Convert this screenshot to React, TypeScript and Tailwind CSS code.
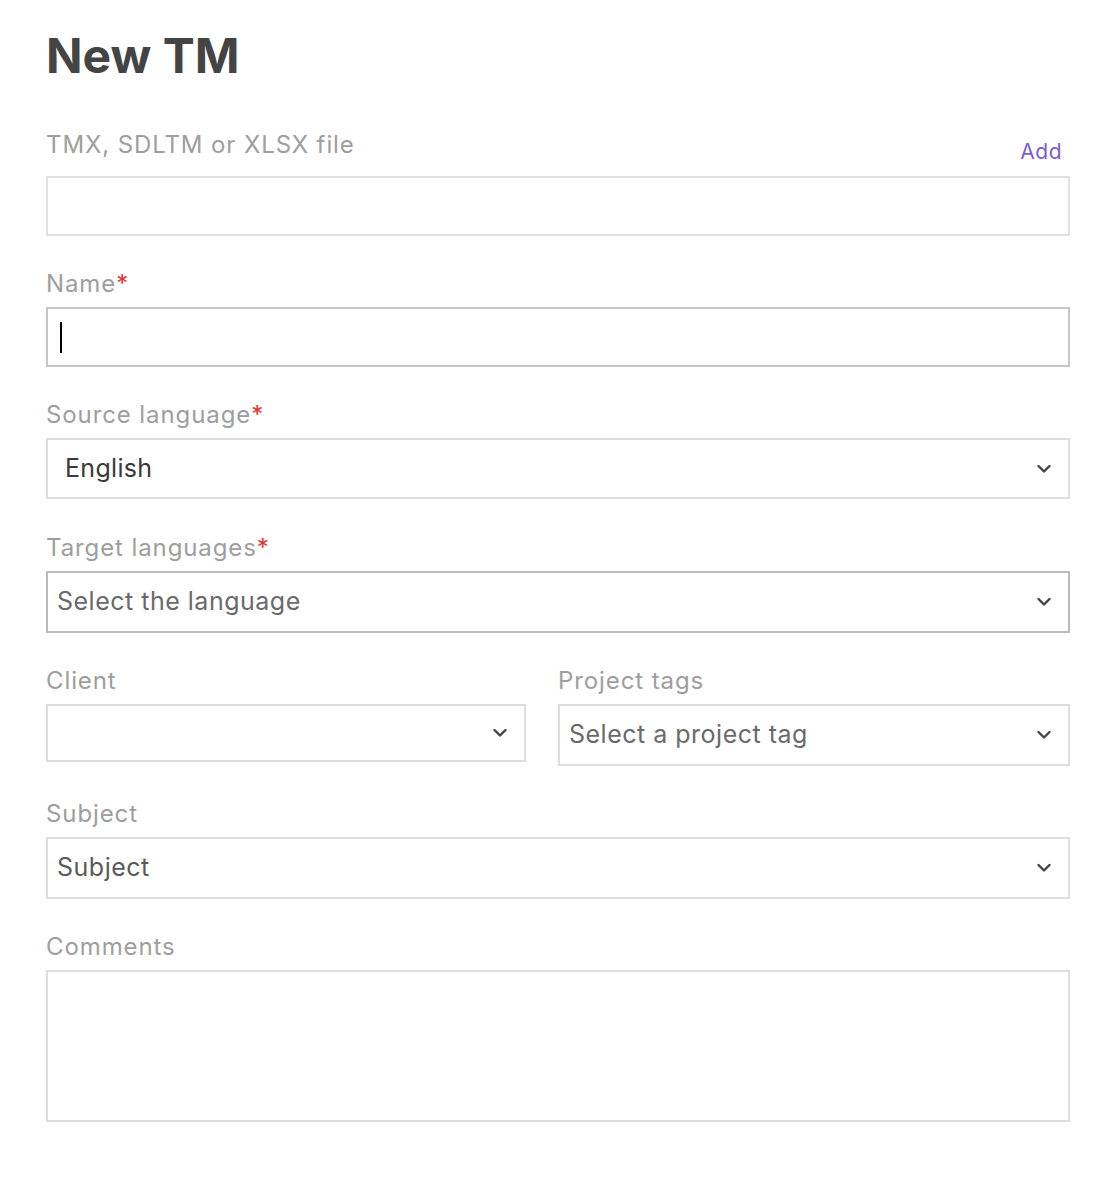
import React from 'react';

const font = { fontFamily: 'Inter, "Noto Sans", sans-serif' };

function Chevron() {
    return (
        <svg width="16" height="10" viewBox="0 0 16 10" fill="none" className="shrink-0">
            <path d="M2.5 2l5.5 5.5 5.5-5.5" stroke="#444" strokeWidth="2.4" strokeLinecap="round" strokeLinejoin="round" />
        </svg>
    );
}

function Label({ text, required }: { text: string; required?: boolean }) {
    return (
        <div className="text-[24px] leading-[36px] tracking-[0.9px] text-[#9e9e9e] mb-[5px]">
            {text}
            {required && <span className="text-[#e5322d]">*</span>}
        </div>
    );
}

export default function App() {
    return (
        <div className="min-h-[1190px] bg-white pl-[46px] pr-[50px] pt-[27px]" style={font}>
            <h1 className="text-[48px] leading-[58px] font-bold text-[#444444]">New TM</h1>

            {/* File */}
            <div className="mt-[39px] h-[44px] flex justify-between items-start mb-[8px]">
                <div className="pt-[3px] text-[24px] leading-[36px] tracking-[0.9px] text-[#9e9e9e]">TMX, SDLTM or XLSX file</div>
                <a href="#" className="mt-[14px] mr-[8px] text-[21px] leading-[28px] tracking-[0.5px] text-[#7a5cd0]">Add</a>
            </div>
            <div className="h-[60px] border-2 border-[#e0e0e0]" />

            {/* Name */}
            <div className="mt-[30px]">
                <Label text="Name" required />
                <div className="h-[60px] border-2 border-[#c6c6c6] flex items-center pl-[12px]">
                    <span className="w-[2px] h-[31px] bg-black" />
                </div>
            </div>

            {/* Source language */}
            <div className="mt-[30px]">
                <Label text="Source language" required />
                <div className="h-[61px] border-2 border-[#dddddd] flex items-center justify-between pl-[17px] pr-[16px]">
                    <span className="text-[25px] tracking-[0.3px] text-[#3a3a3a]">English</span>
                    <Chevron />
                </div>
            </div>

            {/* Target languages */}
            <div className="mt-[31px]">
                <Label text="Target languages" required />
                <div className="h-[62px] border-2 border-[#bbbbbb] flex items-center justify-between pl-[9px] pr-[16px]">
                    <span className="text-[25px] tracking-[0.5px] text-[#6a6a6a]">Select the language</span>
                    <Chevron />
                </div>
            </div>

            {/* Client + Project tags */}
            <div className="mt-[30px] flex gap-[32px] items-start">
                <div className="w-[480px]">
                    <Label text="Client" />
                    <div className="h-[58px] border-2 border-[#dddddd] flex items-center justify-end pr-[16px]">
                        <Chevron />
                    </div>
                </div>
                <div className="flex-1">
                    <Label text="Project tags" />
                    <div className="h-[62px] border-2 border-[#dddddd] flex items-center justify-between pl-[9px] pr-[16px]">
                        <span className="text-[25px] tracking-[0.5px] text-[#6a6a6a]">Select a project tag</span>
                        <Chevron />
                    </div>
                </div>
            </div>

            {/* Subject */}
            <div className="mt-[30px]">
                <Label text="Subject" />
                <div className="h-[62px] border-2 border-[#dddddd] flex items-center justify-between pl-[9px] pr-[16px]">
                    <span className="text-[25px] tracking-[0.5px] text-[#5a5a5a]">Subject</span>
                    <Chevron />
                </div>
            </div>

            {/* Comments */}
            <div className="mt-[30px]">
                <Label text="Comments" />
                <div className="h-[152px] border-2 border-[#dddddd]" />
            </div>
        </div>
    );
}
